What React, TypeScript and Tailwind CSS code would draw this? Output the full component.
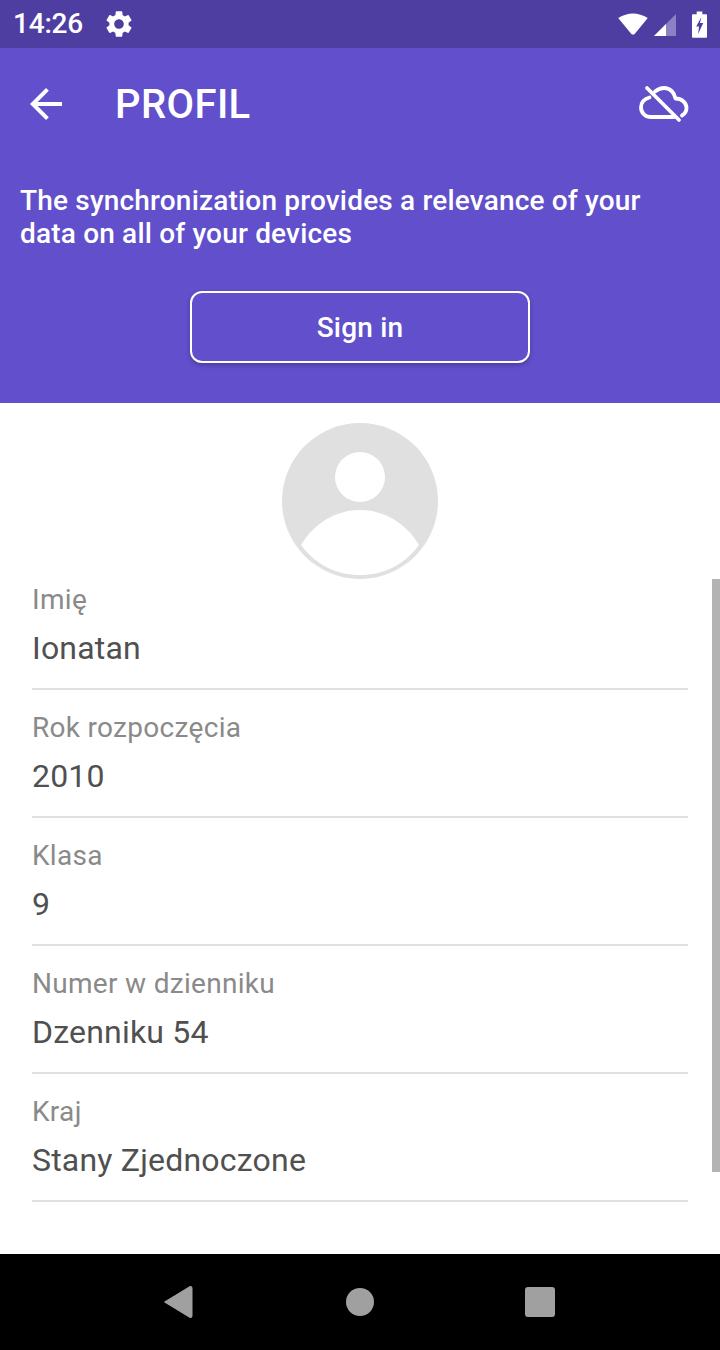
import { MdArrowBack, MdSettings } from "react-icons/md";

const fields = [
  { label: "Imię", value: "Ionatan" },
  { label: "Rok rozpoczęcia", value: "2010" },
  { label: "Klasa", value: "9" },
  { label: "Numer w dzienniku", value: "Dzenniku 54" },
  { label: "Kraj", value: "Stany Zjednoczone" },
];

function StatusIcons() {
  return (
    <div className="flex items-center">
      <svg width="32" height="24" viewBox="0 0 34 26" className="mr-[4px]">
        <path d="M1 6.5 Q17 -3.5 33 6.5 L19 23.5 Q17 25.5 15 23.5 Z" fill="#fff" />
      </svg>
      <svg width="24" height="24" viewBox="0 0 24 24" className="mr-[15px] mt-[1px]">
        <path d="M1 23 L23 1 V23 Z" fill="#fff" fillOpacity="0.35" />
        <path d="M1 23 L13 11 V23 Z" fill="#fff" />
      </svg>
      <svg width="15" height="27" viewBox="0 0 16 28" className="mr-[13px]">
        <path d="M5 0 H11 V3 H15 Q16 3 16 4 V27 Q16 28 15 28 H1 Q0 28 0 27 V4 Q0 3 1 3 H5 Z" fill="#fff" />
        <path d="M10 6 L4.5 16 H7.5 L6.5 24 L12 12.5 H8.5 Z" fill="#4f3ea1" />
      </svg>
    </div>
  );
}

function CloudOff() {
  return (
    <svg width="50" height="38" viewBox="0 0 50 38" fill="none" stroke="#fff" strokeWidth="3.8" strokeLinecap="round" strokeLinejoin="round">
      <path d="M8 3 L40 35" />
      <path d="M10.5 12.5 C5 14 2 18 2 22.5 C2 28 6.5 32 12 32 H35" />
      <path d="M16 6.5 C18.5 4.5 21.5 3 25 3 C31 3 35.5 7.5 36.5 13.5 C42.5 13.5 47.5 17.5 47.5 23 C47.5 26.5 45.5 29 43 30.5" />
    </svg>
  );
}

function Avatar() {
  return (
    <svg width="156" height="156" viewBox="0 0 156 156" className="block">
      <circle cx="78" cy="78" r="78" fill="#e0e0e0" />
      <circle cx="78" cy="54" r="25" fill="#fff" />
      <path d="M19 122 C32 100 54 87 78 87 C102 87 124 100 137 122 C122 142 102 152 78 152 C54 152 34 142 19 122 Z" fill="#fff" />
    </svg>
  );
}

export default function App() {
  return (
    <div className="relative flex h-[1350px] w-[720px] flex-col overflow-hidden bg-white font-['Roboto',sans-serif]">
      <div className="flex h-[48px] shrink-0 items-center justify-between bg-[#4f3ea1] pl-[13px] text-white">
        <div className="flex items-center">
          <span className="text-[28px] font-medium leading-none tracking-[-0.2px]">14:26</span>
          <MdSettings size={32} className="ml-[20px]" />
        </div>
        <StatusIcons />
      </div>

      <div className="h-[355px] shrink-0 bg-[#614fcb] text-white">
        <div className="flex h-[112px] items-center justify-between pl-[22px] pr-[31px]">
          <div className="flex items-center">
            <MdArrowBack size={48} />
            <h1 className="ml-[45px] pt-[2px] text-[40px] font-medium leading-none tracking-[0.4px]">PROFIL</h1>
          </div>
          <CloudOff />
        </div>
        <p className="mt-[24px] px-[20px] text-[28px] font-medium leading-[33px] tracking-[0.18px]">
          The synchronization provides a relevance of your data on all of your devices
        </p>
        <button className="mx-auto mt-[41px] block h-[72px] w-[340px] rounded-[12px] border-2 border-white pt-[2px] text-[28px] font-medium tracking-[0.2px] shadow-[0_2px_4px_rgba(0,0,0,0.25)]">
          Sign in
        </button>
      </div>

      <div className="flex min-h-0 flex-1 flex-col">
        <div className="flex justify-center pt-[20px]">
          <Avatar />
        </div>
        <div className="px-[32px]">
          {fields.map((f) => (
            <div key={f.label} className="flex h-[128px] flex-col border-b-2 border-[#e0e0e0] first:mt-[-17px]">
              <span className="mt-[22px] text-[28px] leading-[32px] tracking-[0.3px] text-[#8a8a8a]">{f.label}</span>
              <span className="mt-[12px] text-[32px] leading-[40px] tracking-[0.2px] text-[#505050]">{f.value}</span>
            </div>
          ))}
        </div>
      </div>

      <div className="absolute right-0 top-[579px] h-[593px] w-[8px] bg-[#b3b3b3]" />

      <div className="flex h-[96px] shrink-0 items-center justify-center gap-[151px] bg-black">
        <svg width="30" height="34" viewBox="0 0 30 34" className="-translate-x-[2px]">
          <path d="M1.5 17 L27 1.5 Q29 1 29 3 V31 Q29 33 27 32.5 Z" fill="#a0a0a0" stroke="#a0a0a0" strokeLinejoin="round" />
        </svg>
        <div className="h-[28px] w-[28px] rounded-full bg-[#a0a0a0]" />
        <div className="h-[30px] w-[30px] rounded-[3px] bg-[#a0a0a0]" />
      </div>
    </div>
  );
}
